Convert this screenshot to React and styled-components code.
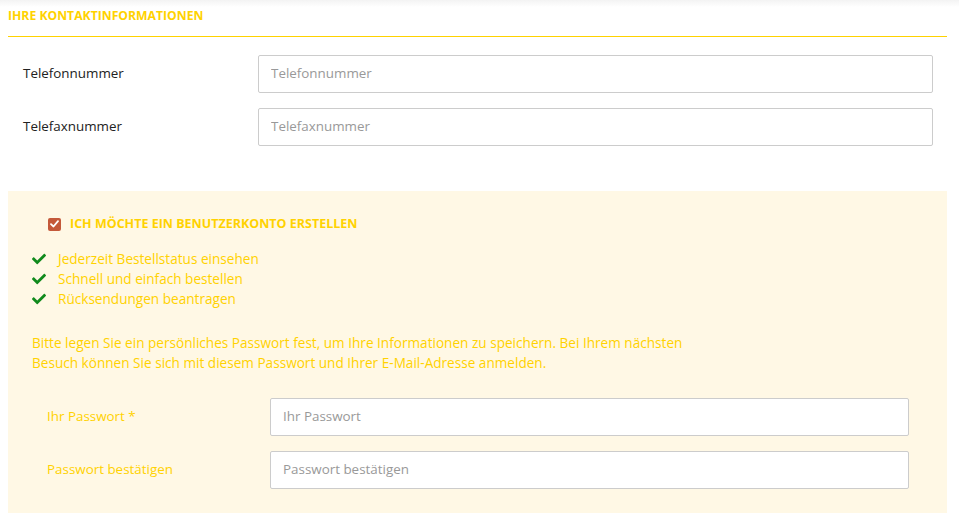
import React from 'react';
import styled, { createGlobalStyle } from 'styled-components';
import { FaCheck } from 'react-icons/fa';

const GlobalStyle = createGlobalStyle`
    body {
        margin: 0;
        background: linear-gradient(to bottom, #f3f3f3 0, #ffffff 7px) no-repeat, #ffffff;
        font-family: "Open Sans", "Liberation Sans", sans-serif;
    }
`

const Page = styled.div`
    padding: 0 12px 20px 8px;
    box-sizing: border-box;
    width: 959px;
`

const Heading = styled.h2`
    margin: 0;
    padding: 7px 0 11px;
    font-size: 12.2px;
    line-height: 18px;
    font-weight: 700;
    text-transform: uppercase;
    color: #ffd200;
    border-bottom: 1px solid #ffd200;
`

const Fields = styled.div`
    display: flex;
    flex-direction: column;
    gap: 15px;
    padding: ${p => p.$pad};
`

const Row = styled.div`
    display: grid;
    grid-template-columns: ${p => p.$labelWidth}px 1fr;
    align-items: center;
`

const Label = styled.label`
    font-size: 13.4px;
    line-height: 20px;
    margin-top: -2px;
    color: ${p => p.$color || '#222222'};
`

const Input = styled.input`
    height: 38px;
    box-sizing: border-box;
    border: 1px solid #cccccc;
    border-radius: 2px;
    padding: 0 12px 2px;
    font-family: inherit;
    font-size: 13.4px;
    color: #333;
    background: #ffffff;
    outline: none;
    &::placeholder {
        color: #999999;
    }
`

const AccountBox = styled.section`
    margin-top: 45px;
    background: #fff8e5;
    padding: 23px 0 24px;
    color: #ffd200;
`

const OptIn = styled.label`
    display: flex;
    align-items: center;
    gap: 9px;
    padding-left: 40px;
    line-height: 20px;
    font-size: 12.5px;
    font-weight: 700;
    text-transform: uppercase;
`

const Box = styled.span`
    width: 13px;
    height: 13px;
    border-radius: 2px;
    background: #c4593a;
    display: flex;
    align-items: center;
    justify-content: center;
`

const Benefits = styled.ul`
    list-style: none;
    margin: 15px 0 0;
    padding: 0 0 0 24px;
`

const Benefit = styled.li`
    display: flex;
    align-items: center;
    gap: 12px;
    font-size: 13.6px;
    line-height: 20px;
    svg {
        color: #118a1c;
        width: 14px;
        height: 14px;
    }
`

const Note = styled.p`
    margin: 24px 0 0;
    padding-left: 24px;
    font-size: 13.6px;
    line-height: 20px;
`

const benefits = [
    'Jederzeit Bestellstatus einsehen',
    'Schnell und einfach bestellen',
    'Rücksendungen beantragen',
]

export default function App() {
    return (
        <Page>
            <GlobalStyle />
            <Heading>Ihre Kontaktinformationen</Heading>
            <Fields $pad="18px 14px 0 15px">
                <Row $labelWidth={235}>
                    <Label>Telefonnummer</Label>
                    <Input placeholder="Telefonnummer" />
                </Row>
                <Row $labelWidth={235}>
                    <Label>Telefaxnummer</Label>
                    <Input placeholder="Telefaxnummer" />
                </Row>
            </Fields>
            <AccountBox>
                <OptIn>
                    <Box>
                        <svg width="9" height="8" viewBox="0 0 9 8">
                            <path d="M1 4.2 L3.5 6.5 L8 1.2" fill="none" stroke="#fff" strokeWidth="1.8" strokeLinecap="round" strokeLinejoin="round" />
                        </svg>
                    </Box>
                    Ich möchte ein Benutzerkonto erstellen
                </OptIn>
                <Benefits>
                    {benefits.map(b => (
                        <Benefit key={b}><FaCheck />{b}</Benefit>
                    ))}
                </Benefits>
                <Note>
                    Bitte legen Sie ein persönliches Passwort fest, um Ihre Informationen zu speichern. Bei Ihrem nächsten<br />
                    Besuch können Sie sich mit diesem Passwort und Ihrer E-Mail-Adresse anmelden.
                </Note>
                <Fields $pad="25px 38px 0 39px">
                    <Row $labelWidth={223}>
                        <Label $color="#ffd200">Ihr Passwort *</Label>
                        <Input type="password" placeholder="Ihr Passwort" />
                    </Row>
                    <Row $labelWidth={223}>
                        <Label $color="#ffd200">Passwort bestätigen</Label>
                        <Input type="password" placeholder="Passwort bestätigen" />
                    </Row>
                </Fields>
            </AccountBox>
        </Page>
    )
}
